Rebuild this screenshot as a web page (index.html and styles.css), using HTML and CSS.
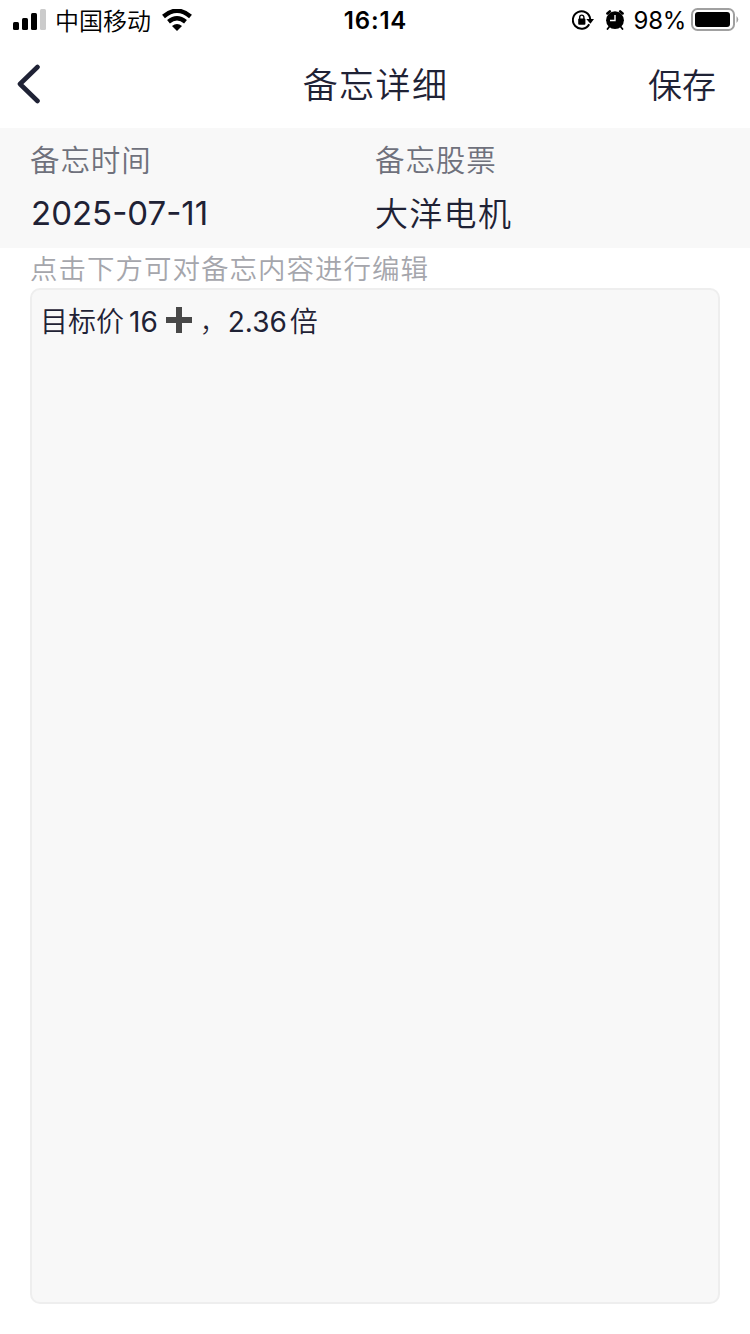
FILE: index.html
```html
<!DOCTYPE html>
<html lang="zh-CN">
<head>
    <meta charset="UTF-8">
    <meta name="viewport" content="width=device-width, initial-scale=1.0">
    <title>备忘详细</title>
    <link rel="stylesheet" href="styles.css">
</head>
<body>
    <div class="status-bar">
        <div class="status-left">
            <svg class="signal" width="33" height="22" viewBox="0 0 33 22">
                <rect x="0" y="13" width="6" height="8" rx="1.5"/>
                <rect x="9" y="9" width="6" height="12" rx="1.5"/>
                <rect x="18" y="4" width="6" height="17" rx="1.5"/>
                <rect x="27" y="0" width="6" height="21" rx="1.5" fill="#cbcbcb"/>
            </svg>
            <span class="carrier">中国移动</span>
            <svg class="wifi" width="30" height="22" viewBox="0 0 30 22">
                <path d="M1.5 7.5Q15-4 28.5 7.5M6.5 12.8Q15 5.7 23.5 12.8" fill="none" stroke="#000" stroke-width="4.4"/>
                <path d="M10 17Q15 13 20 17L15 22Z"/>
            </svg>
        </div>
        <div class="clock">16:14</div>
        <div class="status-right">
            <svg class="lock" width="22" height="20" viewBox="0 0 22 20">
                <path d="M17.2 14.2A8.7 8.7 0 1 1 18.2 9" fill="none" stroke="#000" stroke-width="2"/>
                <path d="M14.3 9H22L18.4 13.8Z"/>
                <rect x="6.2" y="8.5" width="7.2" height="6.2" rx="1"/>
                <path d="M7.7 9V7.2a2.1 2.1 0 0 1 4.2 0V9" fill="none" stroke="#000" stroke-width="1.4"/>
            </svg>
            <svg class="alarm" width="18" height="20" viewBox="0 0 18 20">
                <circle cx="9" cy="10.2" r="8.9"/>
                <path d="M1.4 3.4L3.8 1.4M16.6 3.4L14.2 1.4" stroke="#000" stroke-width="2.6" stroke-linecap="round"/>
                <path d="M3.5 16.5L1.5 19M14.5 16.5L16.5 19" stroke="#000" stroke-width="1.8" stroke-linecap="round"/>
                <path d="M9 5V10.5H4" fill="none" stroke="#fff" stroke-width="1.4"/>
            </svg>
            <span class="percent">98%</span>
            <svg class="battery" width="48" height="24" viewBox="0 0 48 24">
                <rect x="1" y="1" width="42" height="21" rx="5.5" fill="none" stroke="#a0a0a0" stroke-width="2"/>
                <rect x="4" y="4" width="35" height="15" rx="3"/>
                <path d="M45.5 8q3.5 3.5 0 7z" fill="#a0a0a0"/>
            </svg>
        </div>
    </div>

    <div class="nav-bar">
        <a class="back" href="#">
            <svg width="24" height="40" viewBox="0 0 24 40">
                <path d="M20.5 3L3 20L20.5 37" fill="none" stroke="#1f2235" stroke-width="4.6" stroke-linecap="round" stroke-linejoin="round"/>
            </svg>
        </a>
        <div class="title">备忘详细</div>
        <a class="save" href="#">保存</a>
    </div>

    <div class="info">
        <div class="info-item">
            <div class="label">备忘时间</div>
            <div class="value date">2025-07-11</div>
        </div>
        <div class="info-item">
            <div class="label">备忘股票</div>
            <div class="value">大洋电机</div>
        </div>
    </div>

    <div class="hint">点击下方可对备忘内容进行编辑</div>

    <div class="memo" contenteditable="true" spellcheck="false"><span>目标价</span><span class="num first">16</span><svg class="plus" width="28" height="28" viewBox="0 0 28 28"><path d="M11 1H17V11H27V17H17V27H11V17H1V11H11Z" fill="#484848"/></svg><span class="comma">，</span><span class="num">2.36</span><span class="unit">倍</span></div>
</body>
</html>
```
FILE: styles.css
```css
* {
    box-sizing: border-box;
}

body {
    margin: 0;
    height: 1334px;
    display: flex;
    flex-direction: column;
    overflow: hidden;
    background-color: #fff;
    color: #1f2235;
    font-family: Inter, "Noto Sans CJK SC", sans-serif;
    font-weight: 350;
}

a {
    color: inherit;
    text-decoration: none;
}

svg {
    display: block;
    flex: none;
}

.status-bar {
    height: 40px;
    display: grid;
    grid-template-columns: 1fr auto 1fr;
    align-items: center;
    padding: 0 11px 0 13px;
    color: #000;
    font-size: 24px;
    line-height: 40px;
}

.status-left,
.status-right {
    display: flex;
    align-items: center;
}

.status-right {
    justify-content: flex-end;
}

.carrier {
    margin: 0 11px 0 9px;
    padding-top: 3px;
    line-height: 37px;
}

.clock {
    padding: 2px 1px 0 0;
    line-height: 38px;
    font-weight: 600;
    letter-spacing: 0.8px;
}

.alarm {
    margin: 0 10px 0 12px;
}

.percent {
    margin-right: 5px;
    padding-top: 2px;
    font-weight: 400;
    line-height: 38px;
    letter-spacing: -0.3px;
}

.nav-bar {
    height: 88px;
    display: grid;
    grid-template-columns: 100px 1fr 100px;
    align-items: center;
    padding: 0 34px 0 17px;
    line-height: 88px;
}

.title {
    padding: 3px 0 0 18px;
    font-size: 35px;
    letter-spacing: 1.4px;
    line-height: 85px;
    text-align: center;
}

.save {
    justify-self: end;
    padding-top: 4px;
    font-size: 34px;
    line-height: 84px;
}

.info {
    height: 120px;
    display: flex;
    padding: 0 30px;
    background-color: #f8f8f8;
}

.info-item {
    width: 345px;
}

.label {
    height: 60px;
    padding-top: 2px;
    color: #6f717c;
    font-size: 29.5px;
    letter-spacing: 0.9px;
    line-height: 60px;
}

.value {
    padding-top: 1px;
    font-size: 33px;
    letter-spacing: 1.3px;
    line-height: 50px;
}

.date {
    padding: 0 0 0 1px;
    font-weight: 400;
    letter-spacing: 0;
}

.hint {
    height: 40px;
    padding: 1px 0 0 30px;
    color: #a5a6ac;
    font-size: 27.5px;
    letter-spacing: 1px;
    line-height: 40px;
}

.memo {
    flex: 1;
    display: flex;
    align-items: flex-start;
    margin: 0 30px 30px;
    padding: 11px 8px;
    border: 2px solid #eee;
    border-radius: 10px;
    background-color: #f8f8f8;
    font-size: 28px;
    line-height: 42px;
    outline: none;
}

.num {
    font-weight: 400;
}

.first {
    margin-left: 5px;
}

.plus {
    margin: 5px 7px 0;
}

.comma {
    font-weight: 300;
}

.unit {
    margin-left: 3px;
}
```
